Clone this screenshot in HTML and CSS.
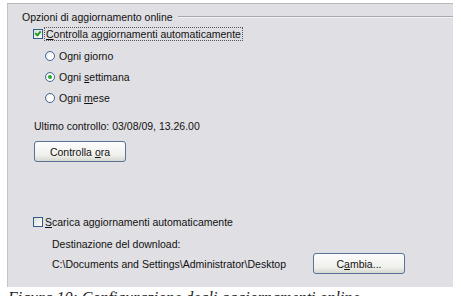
FILE: index.html
```html
<!DOCTYPE html>
<html lang="it">
<head>
  <meta charset="UTF-8" />
  <title>Opzioni di aggiornamento online</title>
  <link rel="stylesheet" href="styles.css">
</head>
<body>
  <div class="panel">
    <div class="group-title"><span>Opzioni di aggiornamento online</span></div>

    <label class="check-row">
      <span class="checkbox checked"></span>
      <span class="focus"><u>C</u>ontrolla aggiornamenti automaticamente</span>
    </label>

    <div class="radios">
      <label class="radio-row"><span class="radio"></span><span>Ogni <u>g</u>iorno</span></label>
      <label class="radio-row"><span class="radio selected"></span><span>Ogni <u>s</u>ettimana</span></label>
      <label class="radio-row"><span class="radio"></span><span>Ogni <u>m</u>ese</span></label>
    </div>

    <p class="last-check">Ultimo controllo: 03/08/09, 13.26.00</p>
    <button class="btn">Controlla <u>o</u>ra</button>

    <label class="check-row download">
      <span class="checkbox"></span>
      <span><u>S</u>carica aggiornamenti automaticamente</span>
    </label>

    <p class="dest-label">Destinazione del download:</p>
    <div class="dest-row">
      <span class="path">C:\Documents and Settings\Administrator\Desktop</span>
      <button class="btn">C<u>a</u>mbia...</button>
    </div>
  </div>

  <p class="caption">Figura 10: Configurazione degli aggiornamenti online</p>
</body>
</html>
```

FILE: styles.css
```css
body {
  margin: 0;
  background: #fff;
  font-family: 'Liberation Sans', Arial, sans-serif;
  font-size: 10.5px;
  color: #111;
}

.panel {
  margin: 3px 8px 0 7px;
  height: 284px;
  box-sizing: border-box;
  background: #e0dfe3;
  border-top: 1px solid #b9b9bc;
  border-left: 1px solid #c4c4c6;
  padding: 6px 0 0 14px;
}

u {
  text-decoration: underline;
  text-underline-offset: 1px;
}

.group-title {
  display: flex;
  align-items: center;
  height: 14px;
  line-height: 14px;
}

.group-title::after {
  content: "";
  flex: 1;
  margin-left: 5px;
  border-top: 1px solid #a9a9ab;
  border-bottom: 1px solid #f4f4f6;
}

.check-row {
  display: flex;
  align-items: center;
  height: 16px;
  margin: 2px 0 0 11px;
}

.checkbox {
  width: 8px;
  height: 8px;
  border: 1px solid #2f5d8c;
  background: linear-gradient(135deg, #dcdcd6, #fff);
  margin-right: 2px;
  position: relative;
}

.checkbox.checked::after {
  content: "";
  position: absolute;
  left: 2px;
  top: 0;
  width: 2px;
  height: 4px;
  border: solid #21a121;
  border-width: 0 2px 2px 0;
  transform: rotate(40deg);
}

.focus {
  outline: 1px dotted #555;
  outline-offset: 0;
  padding: 0 1px;
}

.radios {
  margin: 6px 0 0 23px;
  display: flex;
  flex-direction: column;
  gap: 5px;
}

.radio-row {
  display: flex;
  align-items: center;
  height: 16px;
}

.radio {
  width: 8px;
  height: 8px;
  border: 1px solid #3d6a99;
  border-radius: 50%;
  background: radial-gradient(circle at 65% 65%, #fff 40%, #dcdcd6);
  margin-right: 4px;
  position: relative;
}

.radio.selected::after {
  content: "";
  position: absolute;
  left: 2px;
  top: 2px;
  width: 4px;
  height: 4px;
  border-radius: 50%;
  background: #2fa52f;
}

.last-check {
  margin: 13px 0 0 12px;
  height: 14px;
  line-height: 14px;
}

.btn {
  display: block;
  font: inherit;
  color: #111;
  width: 92px;
  height: 21px;
  margin: 8px 0 0 12px;
  padding: 0;
  border: 1px solid #5a7296;
  border-radius: 3px;
  background: linear-gradient(#fdfdfd, #f0f0ec 70%, #d8d8d2);
  cursor: pointer;
}

.check-row.download {
  margin-top: 52px;
}

.dest-label {
  margin: 7px 0 0 30px;
  height: 14px;
  line-height: 14px;
}

.dest-row {
  display: flex;
  align-items: center;
  margin: 2px 0 0 30px;
}

.path {
  width: 261px;
}

.dest-row .btn {
  margin: 0;
}

.caption {
  margin: 2px 0 0 8px;
  font-family: 'Liberation Serif', serif;
  font-size: 16px;
  font-style: italic;
  color: #222;
}
```
